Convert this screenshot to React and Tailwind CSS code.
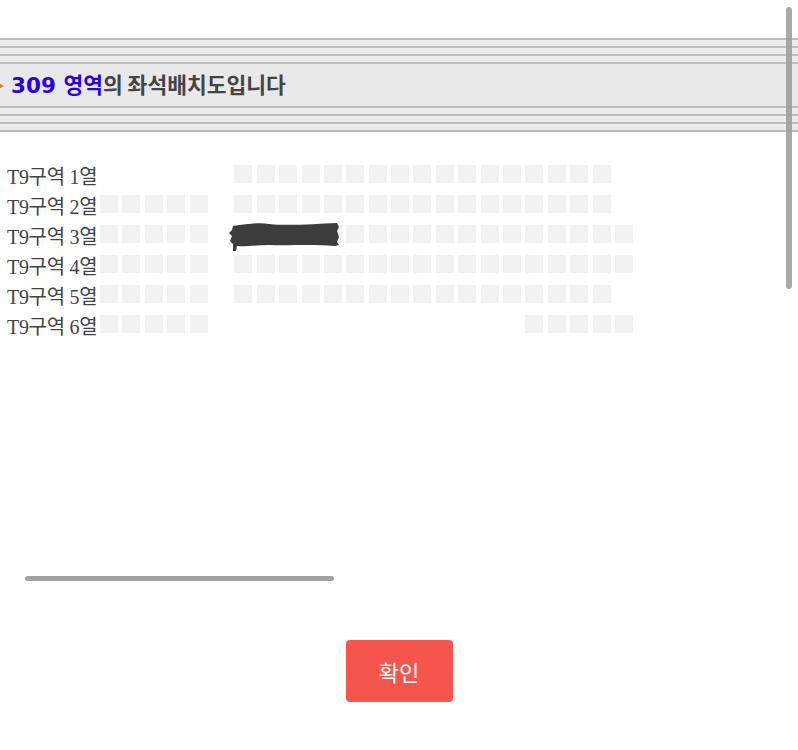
import React from "react";

const rows = [
  { label: "T9구역 1열", left: 0, right: [6, 22] },
  { label: "T9구역 2열", left: 5, right: [6, 22] },
  { label: "T9구역 3열", left: 5, right: [6, 23], hidden: true },
  { label: "T9구역 4열", left: 5, right: [6, 23] },
  { label: "T9구역 5열", left: 5, right: [6, 22] },
  { label: "T9구역 6열", left: 5, right: [19, 23] },
];

const Stripes = () => (
  <div className="flex flex-col">
    <div className="h-[2px] bg-[#bcbcbc]" />
    <div className="h-[6px]" />
    <div className="h-[2px] bg-[#bcbcbc]" />
    <div className="h-[6px]" />
    <div className="h-[2px] bg-[#bcbcbc]" />
    <div className="h-[6px]" />
    <div className="h-[2px] bg-[#bcbcbc]" />
  </div>
);

const SeatRow = ({ row }) => {
  const cells = [];
  for (let i = 0; i < 24; i++) {
    const on = i < row.left || (i >= row.right[0] && i <= row.right[1]);
    cells.push(
      <div
        key={i}
        className={`w-[18px] h-[18px] ${on ? "bg-[#f2f2f2]" : ""}`}
      />
    );
  }
  return (
    <div className="flex h-[30px] items-start">
      <div className="w-[100px] pl-[7px] leading-[30px] text-[20px] tracking-[-0.3px] text-[#444] whitespace-nowrap font-['Liberation_Serif','Noto_Sans_CJK_KR',serif]">
        {row.label}
      </div>
      <div className="relative mt-[3px] grid grid-cols-[repeat(24,18px)] gap-x-[4.4px]">
        {cells}
        {row.hidden && (
          <svg
            className="absolute left-[129px] top-[-4px]"
            width="112"
            height="30"
            viewBox="0 0 112 30"
          >
            <path
              d="M4 5 C20 3 30 1 40 3 C60 5 85 3 108 2 L110 6 L108 10 L110 16 L108 21 L110 24 L106 25 C80 23 60 25 40 24 C28 24 16 26 8 25 L7 30 L4 30 L4 23 L1 20 L3 15 L0 12 L3 9 Z"
              fill="#3c3c3c"
            />
          </svg>
        )}
      </div>
    </div>
  );
};

const App = () => {
  return (
    <div className="relative w-[798px] h-[750px] bg-white overflow-hidden">
      {/* header band */}
      <div className="mt-[38px] bg-[#ebebeb] flex flex-col">
        <Stripes />
        <div className="h-[42px] flex items-center bg-[#e9e9e9] relative">
          <svg className="absolute left-[-3px] top-[18px]" width="8" height="8" viewBox="0 0 8 8">
            <path d="M0 0 L7 4 L0 8 Z" fill="#f07a1a" />
          </svg>
          <div className="pl-[11px] text-[21.5px] whitespace-nowrap font-['DejaVu_Sans','Noto_Sans_CJK_KR',sans-serif]">
            <span className="text-[#2a00e6] font-bold">309 </span>
            <span className="text-[#2a00e6] font-semibold font-['Noto_Sans_CJK_KR',sans-serif]">영역</span>
            <span className="text-[#444] font-semibold font-['Noto_Sans_CJK_KR',sans-serif]">의 좌석배치도입니다</span>
          </div>
        </div>
        <Stripes />
      </div>

      {/* seat map */}
      <div className="mt-[30px] flex flex-col">
        {rows.map((r) => (
          <SeatRow key={r.label} row={r} />
        ))}
      </div>

      {/* confirm */}
      <div className="mt-[298px] flex justify-center">
        <button className="w-[107px] h-[62px] rounded-[4px] bg-[#f5554c] text-white text-[22px] font-['Noto_Sans_CJK_KR',sans-serif]">
          확인
        </button>
      </div>

      {/* overlay scrollbars */}
      <div className="absolute left-[25px] top-[576px] w-[309px] h-[5px] rounded-full bg-[#a2a2a2]" />
      <div className="absolute left-[786px] top-[7px] w-[6px] h-[282px] rounded-full bg-[#9e9e9e]/90" />
    </div>
  );
};

export default App;
